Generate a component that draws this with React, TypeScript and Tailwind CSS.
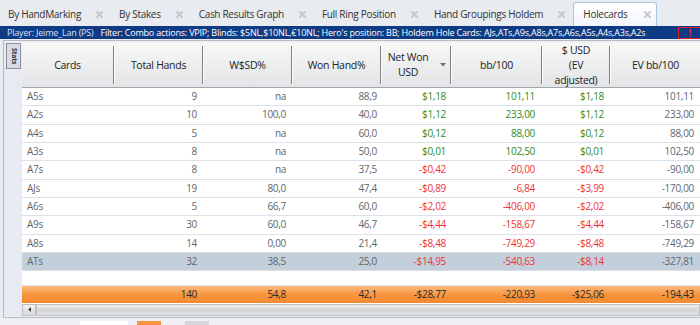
type Tone = 'n' | 'g' | 'r';

type Row = {
  card: string;
  hands: string;
  wsd: string;
  won: string;
  net: string;
  bb: string;
  ev: string;
  evbb: string;
  tone: Tone;
  selected?: boolean;
};

const rows: Row[] = [
  { card: 'A5s', hands: '9', wsd: 'na', won: '88,9', net: '$1,18', bb: '101,11', ev: '$1,18', evbb: '101,11', tone: 'g' },
  { card: 'A2s', hands: '10', wsd: '100,0', won: '40,0', net: '$1,12', bb: '233,00', ev: '$1,12', evbb: '233,00', tone: 'g' },
  { card: 'A4s', hands: '5', wsd: 'na', won: '60,0', net: '$0,12', bb: '88,00', ev: '$0,12', evbb: '88,00', tone: 'g' },
  { card: 'A3s', hands: '8', wsd: 'na', won: '50,0', net: '$0,01', bb: '102,50', ev: '$0,01', evbb: '102,50', tone: 'g' },
  { card: 'A7s', hands: '8', wsd: 'na', won: '37,5', net: '-$0,42', bb: '-90,00', ev: '-$0,42', evbb: '-90,00', tone: 'r' },
  { card: 'AJs', hands: '19', wsd: '80,0', won: '47,4', net: '-$0,89', bb: '-6,84', ev: '-$3,99', evbb: '-170,00', tone: 'r' },
  { card: 'A6s', hands: '5', wsd: '66,7', won: '60,0', net: '-$2,02', bb: '-406,00', ev: '-$2,02', evbb: '-406,00', tone: 'r' },
  { card: 'A9s', hands: '30', wsd: '60,0', won: '46,7', net: '-$4,44', bb: '-158,67', ev: '-$4,44', evbb: '-158,67', tone: 'r' },
  { card: 'A8s', hands: '14', wsd: '0,00', won: '21,4', net: '-$8,48', bb: '-749,29', ev: '-$8,48', evbb: '-749,29', tone: 'r' },
  { card: 'ATs', hands: '32', wsd: '38,5', won: '25,0', net: '-$14,95', bb: '-540,63', ev: '-$8,14', evbb: '-327,81', tone: 'r', selected: true },
];

const tabs = ['By HandMarking', 'By Stakes', 'Cash Results Graph', 'Full Ring Position', 'Hand Groupings Holdem'];

const toneClass: Record<Tone, string> = {
  n: 'text-[#62666c]',
  g: 'text-[#2f8a2a]',
  r: 'text-[#ee3338]',
};

function CloseX() {
  return (
    <svg width="7" height="7" viewBox="0 0 7 7" className="shrink-0">
      <path d="M1 1L6 6M6 1L1 6" stroke="#c4c6c9" strokeWidth="1.8" strokeLinecap="round" />
    </svg>
  );
}

function HeadCell({ w, children, last }: { w: string; children: React.ReactNode; last?: boolean }) {
  return (
    <div className={`flex h-full items-center ${w}`}>
      <div className="relative flex flex-1 items-center justify-center text-center leading-[15px] text-[#222]">
        {children}
      </div>
      {!last && (
        <div className="flex h-[38px]">
          <div className="w-px bg-[#7d7f83]" />
          <div className="w-px bg-white" />
        </div>
      )}
    </div>
  );
}

const cols = 'grid grid-cols-[93px_89px_89px_89px_70px_91px_68px_89px]';

export default function App() {
  return (
    <div
      className="flex h-[325px] w-[700px] flex-col overflow-hidden bg-[#e9ecf0] text-[10px] tracking-[-0.3px]"
      style={{ fontFamily: "'Open Sans', 'Noto Sans', sans-serif" }}
    >
      {/* tab strip */}
      <div className="flex h-[26px] items-end bg-[#e8ebef]">
        {tabs.map((t) => (
          <div key={t} className="flex h-[24px] items-center gap-[15px] px-[8px] text-[#333]">
            <span>{t}</span>
            <CloseX />
          </div>
        ))}
        <div className="flex h-[24px] items-center gap-[16px] rounded-t-[3px] border border-b-0 border-[#a9c6e4] bg-linear-to-b from-white to-[#f1f6fc] pl-[9px] pr-[5px] text-[#333]">
          <span>Holecards</span>
          <CloseX />
        </div>
      </div>

      {/* filter bar */}
      <div className="flex h-[13px] items-center overflow-hidden whitespace-nowrap bg-[#0f3b85] pl-[7px] text-[9px] leading-[13px] tracking-[-0.2px]">
        <span className="text-[#cfe0ff]">Player: Jeime_Lan (PS)</span>
        <span className="ml-[7px] text-white">
          Filter: Combo actions: VPIP; Blinds: $5NL,$10NL,€10NL; Hero's position: BB; Holdem Hole Cards: AJs,ATs,A9s,A8s,A7s,A6s,A5s,A4s,A3s,A2s
        </span>
        <div className="ml-auto flex h-[12px] w-[24px] shrink-0 translate-x-[2px] items-center justify-center border border-[#d4262b] text-[11px] font-bold leading-none text-[#e0262c]">
          !
        </div>
      </div>

      <div className="h-px" />

      {/* frame */}
      <div className="ml-[3px] flex border-l border-t border-b border-[#b5bac2] bg-[#eef0f3] pt-[2px] pb-[1px]">
        {/* side panel */}
        <div className="w-[18px] shrink-0 bg-[#e7eaf0]">
          <div className="ml-[2px] flex h-[26px] w-[15px] items-center justify-center border border-[#8c8e9c] bg-[#d9dae6] text-[7px] font-bold text-[#333] [writing-mode:vertical-rl]">
            Stats
          </div>
        </div>

        {/* grid */}
        <div className="flex w-[678px] flex-col bg-white">
          <div className="flex h-[45px] border-b border-[#a3a6ab] bg-linear-to-b from-[#f8f8f8] to-[#e3e4e6] text-[10.5px]">
            <HeadCell w="w-[93px]">Cards</HeadCell>
            <HeadCell w="w-[89px]">Total Hands</HeadCell>
            <HeadCell w="w-[89px]">W$SD%</HeadCell>
            <HeadCell w="w-[89px]">Won Hand%</HeadCell>
            <HeadCell w="w-[70px]">
              <div className="flex w-full items-center justify-center gap-[12px] pl-[2px]">
                <span>
                  Net Won
                  <br />
                  USD
                </span>
                <svg width="6" height="4" viewBox="0 0 6 4">
                  <path d="M0 0H6L3 3.5Z" fill="#6c6e72" />
                </svg>
              </div>
            </HeadCell>
            <HeadCell w="w-[91px]">bb/100</HeadCell>
            <HeadCell w="w-[68px]">
              <span>
                $ USD
                <br />
                (EV
                <br />
                adjusted)
              </span>
            </HeadCell>
            <HeadCell w="w-[89px]" last>
              EV bb/100
            </HeadCell>
          </div>

          {rows.map((r) => (
            <div
              key={r.card}
              className={`${cols} h-[18.33px] items-center border-b border-[#dde1e7] ${r.selected ? 'bg-[#c3cfdb]' : 'bg-white'}`}
            >
              <span className="pl-[5px] text-[#62666c]">{r.card}</span>
              <span className="pr-[7px] text-right text-[#62666c]">{r.hands}</span>
              <span className="pr-[7px] text-right text-[#62666c]">{r.wsd}</span>
              <span className="pr-[5px] text-right text-[#62666c]">{r.won}</span>
              <span className={`pr-[6px] text-right ${toneClass[r.tone]}`}>{r.net}</span>
              <span className={`pr-[8px] text-right ${toneClass[r.tone]}`}>{r.bb}</span>
              <span className={`pr-[7px] text-right ${toneClass[r.tone]}`}>{r.ev}</span>
              <span className="pr-[6px] text-right text-[#62666c]">{r.evbb}</span>
            </div>
          ))}

          <div className="h-[14.7px] border-b border-[#e3e6eb] bg-white" />

          <div className={`${cols} h-[17px] items-center bg-linear-to-b from-[#fdbb7c] via-[#f8953f] to-[#f48a2e] text-[#2b2b2b]`}>
            <span />
            <span className="pr-[7px] text-right">140</span>
            <span className="pr-[7px] text-right">54,8</span>
            <span className="pr-[5px] text-right">42,1</span>
            <span className="pr-[6px] text-right">-$28,77</span>
            <span className="pr-[8px] text-right">-220,93</span>
            <span className="pr-[7px] text-right">-$25,06</span>
            <span className="pr-[6px] text-right">-194,43</span>
          </div>

          {/* scrollbar */}
          <div className="mt-px flex h-[12px] bg-[#e6e7e9]">
            <div className="flex w-[14px] items-center justify-center border border-[#bcbec2] bg-linear-to-b from-[#f4f4f4] to-[#d8d9db]">
              <svg width="3" height="5" viewBox="0 0 3 5">
                <path d="M3 0V5L0 2.5Z" fill="#444" />
              </svg>
            </div>
            <div className="flex-1 border border-[#bfc1c5] bg-linear-to-b from-[#f0f0f1] via-[#d3d4d6] to-[#e2e3e5]" />
          </div>
        </div>
      </div>

      {/* bottom strip */}
      <div className="flex flex-1 items-end bg-[#eef0f3]">
        <div className="ml-[80px] h-[4px] w-[48px] bg-white" />
        <div className="ml-[9px] h-[4px] w-[24px] bg-[#f7963f]" />
        <div className="ml-[24px] h-[4px] w-[24px] bg-[#d4d6da]" />
      </div>
    </div>
  );
}
